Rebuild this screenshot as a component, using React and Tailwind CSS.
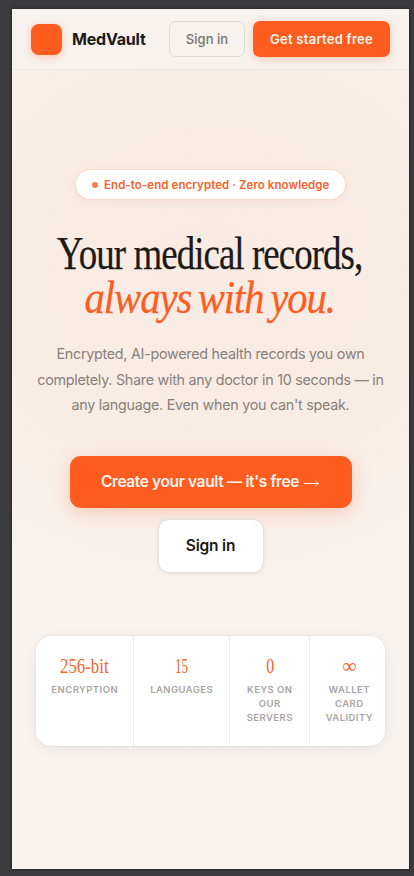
const stats = [
  {
    value: "256-bit",
    label: "Encryption",
    col: "w-[99px] border-r",
    num: "scale-x-[0.8]",
  },
  {
    value: "15",
    label: "Languages",
    col: "w-[96px] border-r",
    num: "scale-x-[0.62]",
  },
  {
    value: "0",
    label: "Keys on our servers",
    col: "w-[80px] border-r pl-[13px] pr-3",
    num: "scale-x-[0.76]",
  },
  {
    value: "∞",
    label: "Wallet card validity",
    col: "flex-1 pl-4 pr-3",
    num: "scale-x-[0.95]",
  },
];

function Arrow() {
  return (
    <svg
      className="ml-1 inline-block align-[-2px]"
      width="17"
      height="12"
      viewBox="0 0 17 12"
      fill="none"
      stroke="currentColor"
      strokeWidth="1"
    >
      <path d="M0.5 6.5H15.5M12.5 3.5C13.2 5 14.2 6 15.8 6.5C14.2 7 13.2 8 12.5 9.5" />
    </svg>
  );
}

function Navbar() {
  return (
    <nav className="flex h-[61px] items-center justify-between border-b border-[#ece7e3] bg-[#f7f2ed] px-[19px]">
      <div className="flex items-center gap-[10px]">
        <div className="size-[31px] rounded-[8px] bg-[#ff5c1f] shadow-[0_2px_7px_rgba(255,92,31,0.3)]" />
        <span className="text-[16px] font-bold tracking-[-0.2px] text-[#1c1917]">
          MedVault
        </span>
      </div>
      <div className="flex gap-2">
        <button className="h-[36px] w-[76px] rounded-[7px] border border-[#dfdad6] pt-[2px] text-[13px] font-medium tracking-[0.05px] text-[#78726d]">
          Sign in
        </button>
        <button className="h-[36px] w-[137px] rounded-[7px] bg-[#ff5c1f] pt-[2px] text-[13px] font-semibold tracking-[0.26px] whitespace-nowrap text-[#fff4ee] shadow-[0_2px_8px_rgba(255,92,31,0.25)]">
          Get started free
        </button>
      </div>
    </nav>
  );
}

function Hero() {
  return (
    <section className="flex flex-col items-center">
      <div className="mt-[100px] flex h-[29px] w-[269px] items-center rounded-full bg-white pl-4 shadow-[0_0_0_1px_rgba(255,92,31,0.07),0_2px_10px_rgba(255,92,31,0.1)]">
        <span className="mr-[6px] size-[6px] rounded-full bg-[#ff7d4b]" />
        <span className="pt-[2px] text-[11.5px] font-semibold tracking-[0.07px] whitespace-nowrap text-[#f9622c]">
          End-to-end encrypted · Zero knowledge
        </span>
      </div>

      <h1 className="mt-8 flex flex-col items-center pr-[2px] font-['Liberation_Serif',serif] text-[47px] leading-[44px] tracking-[-1.2px] whitespace-nowrap text-[#1c1917] [-webkit-text-stroke:0.25px_currentColor]">
        <span className="scale-x-[0.785]">Your medical records,</span>
        <em className="scale-x-[0.865] text-[#ff5c1f] [word-spacing:-3px]">
          always with you.
        </em>
      </h1>

      <p className="mt-[22px] text-center text-[14.3px] leading-[25.5px] tracking-[-0.26px] whitespace-nowrap text-[#87807b]">
        Encrypted, AI-powered health records you own
        <br />
        completely. Share with any doctor in 10 seconds — in
        <br />
        any language. Even when you can't speak.
      </p>

      <button className="mt-[38px] h-[52px] w-[282px] rounded-[11px] bg-[#ff5c1f] text-[15.5px] font-semibold tracking-[-0.38px] whitespace-nowrap text-[#fff4ee] shadow-[0_5px_18px_rgba(255,92,31,0.25)]">
        Create your vault — it's free
        <Arrow />
      </button>
      <button className="mt-[11px] h-[54px] w-[106px] rounded-[11px] border border-[#e3e0dd] bg-white text-[15.5px] font-semibold tracking-[-0.2px] text-[#1c1917] shadow-[0_1px_4px_rgba(0,0,0,0.07)]">
        Sign in
      </button>
    </section>
  );
}

function Stats() {
  return (
    <div className="ml-6 mt-[63px] flex h-[110px] w-[349px] overflow-hidden rounded-[15px] bg-white shadow-[0_0_0_1px_rgba(0,0,0,0.03),0_3px_16px_rgba(0,0,0,0.06)]">
      {stats.map((s) => (
        <div
          key={s.label}
          className={`flex flex-col items-center border-[#eeecea] pt-[17px] text-center ${s.col}`}
        >
          <span
            className={`font-['Liberation_Serif',serif] text-[21px] leading-[26px] text-[#f96330] ${s.num}`}
          >
            {s.value}
          </span>
          <span className="mt-[4px] text-[9.5px] leading-[14px] font-semibold tracking-[0.45px] text-[#a8a5a2] uppercase">
            {s.label}
          </span>
        </div>
      ))}
    </div>
  );
}

export default function App() {
  return (
    <div className="h-[876px] w-[414px] overflow-hidden bg-[#3b3a3d] pt-[9px] pl-3 font-['Inter',sans-serif]">
      <main className="h-[860px] w-[397px] overflow-hidden bg-[#f8f3ee] bg-[radial-gradient(circle,rgba(60,40,30,0.018)_0.8px,transparent_1.2px),radial-gradient(ellipse_100%_40%_at_50%_30%,rgba(255,92,31,0.055),rgba(255,92,31,0.04)_55%,transparent)] bg-size-[27px_27px,100%_100%] shadow-[0_0_3px_rgba(0,0,0,0.6)]">
        <Navbar />
        <Hero />
        <Stats />
      </main>
    </div>
  );
}
